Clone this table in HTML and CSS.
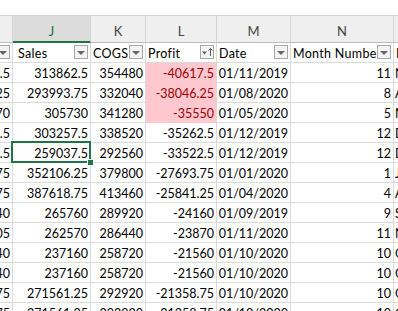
FILE: index.html
```html
<!DOCTYPE html>
<html lang="en">
<head>
  <meta charset="UTF-8">
  <title>Sheet1 - Profit by month</title>
  <link rel="stylesheet" href="styles.css">
</head>
<body>
  <div class="sheet">
    <div class="topbar"></div>
    <div class="grid">
      <!-- column letters -->
      <div class="cell col-head"></div>
      <div class="cell col-head active-col">J</div>
      <div class="cell col-head">K</div>
      <div class="cell col-head">L</div>
      <div class="cell col-head">M</div>
      <div class="cell col-head">N</div>
      <div class="cell col-head">O</div>

      <!-- table header with filters -->
      <div class="cell filter"><span class="label"></span><span class="filter-btn"></span></div>
      <div class="cell filter"><span class="label indent">Sales</span><span class="filter-btn"></span></div>
      <div class="cell filter"><span class="label">COGS</span><span class="filter-btn"></span></div>
      <div class="cell filter">
        <span class="label">Profit</span>
        <span class="filter-btn sorted">
          <svg width="12" height="12" viewBox="0 0 12 12">
            <polygon points="1,5.5 6,5.5 3.5,8.5" fill="#5f5f5f"/>
            <line x1="9.5" y1="2.5" x2="9.5" y2="10" stroke="#5f5f5f" stroke-width="1"/>
            <polyline points="7.5,4.5 9.5,2.5 11.5,4.5" fill="none" stroke="#5f5f5f" stroke-width="1"/>
          </svg>
        </span>
      </div>
      <div class="cell filter"><span class="label">Date</span><span class="filter-btn"></span></div>
      <div class="cell filter"><span class="label">Month Number</span><span class="filter-btn"></span></div>
      <div class="cell filter"><span class="label">Month Name</span><span class="filter-btn"></span></div>

      <!-- rows -->
      <div class="cell num">.5</div><div class="cell num">313862.5</div><div class="cell num">354480</div><div class="cell num bad">-40617.5</div><div class="cell num">01/11/2019</div><div class="cell num">11</div><div class="cell text">November</div>
      <div class="cell num">25</div><div class="cell num">293993.75</div><div class="cell num">332040</div><div class="cell num bad">-38046.25</div><div class="cell num">01/08/2020</div><div class="cell num">8</div><div class="cell text">August</div>
      <div class="cell num">70</div><div class="cell num">305730</div><div class="cell num">341280</div><div class="cell num bad">-35550</div><div class="cell num">01/05/2020</div><div class="cell num">5</div><div class="cell text">May</div>
      <div class="cell num">.5</div><div class="cell num">303257.5</div><div class="cell num">338520</div><div class="cell num">-35262.5</div><div class="cell num">01/12/2019</div><div class="cell num">12</div><div class="cell text">December</div>
      <div class="cell num">.5</div><div class="cell num active-cell">259037.5<span class="cursor"><span class="handle"></span></span></div><div class="cell num">292560</div><div class="cell num">-33522.5</div><div class="cell num">01/12/2019</div><div class="cell num">12</div><div class="cell text">December</div>
      <div class="cell num">75</div><div class="cell num">352106.25</div><div class="cell num">379800</div><div class="cell num">-27693.75</div><div class="cell num">01/01/2020</div><div class="cell num">1</div><div class="cell text">January</div>
      <div class="cell num">75</div><div class="cell num">387618.75</div><div class="cell num">413460</div><div class="cell num">-25841.25</div><div class="cell num">01/04/2020</div><div class="cell num">4</div><div class="cell text">April</div>
      <div class="cell num">40</div><div class="cell num">265760</div><div class="cell num">289920</div><div class="cell num">-24160</div><div class="cell num">01/09/2019</div><div class="cell num">9</div><div class="cell text">September</div>
      <div class="cell num">05</div><div class="cell num">262570</div><div class="cell num">286440</div><div class="cell num">-23870</div><div class="cell num">01/11/2020</div><div class="cell num">11</div><div class="cell text">November</div>
      <div class="cell num">40</div><div class="cell num">237160</div><div class="cell num">258720</div><div class="cell num">-21560</div><div class="cell num">01/10/2020</div><div class="cell num">10</div><div class="cell text">October</div>
      <div class="cell num">40</div><div class="cell num">237160</div><div class="cell num">258720</div><div class="cell num">-21560</div><div class="cell num">01/10/2020</div><div class="cell num">10</div><div class="cell text">October</div>
      <div class="cell num">75</div><div class="cell num">271561.25</div><div class="cell num">292920</div><div class="cell num">-21358.75</div><div class="cell num">01/10/2020</div><div class="cell num">10</div><div class="cell text">October</div>
      <div class="cell num">75</div><div class="cell num">271561.25</div><div class="cell num">292920</div><div class="cell num">-21358.75</div><div class="cell num">01/10/2020</div><div class="cell num">10</div><div class="cell text">October</div>
    </div>
  </div>
</body>
</html>
```

FILE: styles.css
```css
body {
  margin: 0;
  font-family: Lato, "Liberation Sans", sans-serif;
  font-size: 12.5px;
  color: #000;
  background-color: #fff;
}

.sheet {
  width: 398px;
  height: 311px;
  overflow: hidden;
}

.topbar {
  height: 15px;
  border-bottom: 1px solid #d4d4d4;
}

.grid {
  display: grid;
  grid-template-columns: 13px 78px 55px 71px 74px 103px 60px;
  grid-template-rows: 27px;
  grid-auto-rows: 20px;
  width: max-content;
}

.cell {
  box-sizing: border-box;
  border-right: 1px solid #dadada;
  border-bottom: 1px solid #dadada;
  padding: 2px 2px 0 2px;
  line-height: 17px;
  white-space: nowrap;
  overflow: hidden;
}

/* column letters */
.col-head {
  padding-top: 7px;
  text-align: center;
  font-size: 13px;
  color: #444;
  background-color: #efefef;
  border-right-color: #d4d4d4;
  border-bottom-color: #bdbdbd;
}

.active-col {
  color: #217346;
  background-color: #dcdcdc;
  border-bottom: 2px solid #217346;
}

/* header row with filter buttons */
.filter {
  display: flex;
  align-items: flex-start;
  justify-content: flex-end;
  padding: 0 2px 0 2px;
}

.label {
  flex: 1;
  min-width: 0;
  overflow: hidden;
  padding-top: 2px;
  letter-spacing: 0.3px;
}

.label.indent {
  padding-left: 3px;
}

.filter-btn {
  flex: none;
  box-sizing: border-box;
  width: 14px;
  height: 14px;
  margin-top: 2px;
  border: 1px solid #a8a8a8;
  background-color: #f3f3f3;
  display: flex;
  align-items: center;
  justify-content: center;
}

.filter-btn::after {
  content: "";
  width: 0;
  height: 0;
  margin-top: 1px;
  border-left: 4px solid transparent;
  border-right: 4px solid transparent;
  border-top: 4px solid #666;
}

.filter-btn.sorted::after {
  display: none;
}

/* data */
.num {
  display: flex;
  justify-content: flex-end;
}

.text {
  padding-left: 1px;
}

.bad {
  color: #9c0006;
  background-color: #ffc7ce;
  border-bottom-color: #ffc7ce;
}

.active-cell {
  position: relative;
  overflow: visible;
  z-index: 1;
}

.cursor {
  position: absolute;
  left: -2px;
  top: -2px;
  right: -1px;
  bottom: -1px;
  border: 2px solid #217346;
}

.handle {
  position: absolute;
  right: -5px;
  bottom: -5px;
  width: 5px;
  height: 5px;
  background-color: #217346;
  border: 1px solid #fff;
}
```
